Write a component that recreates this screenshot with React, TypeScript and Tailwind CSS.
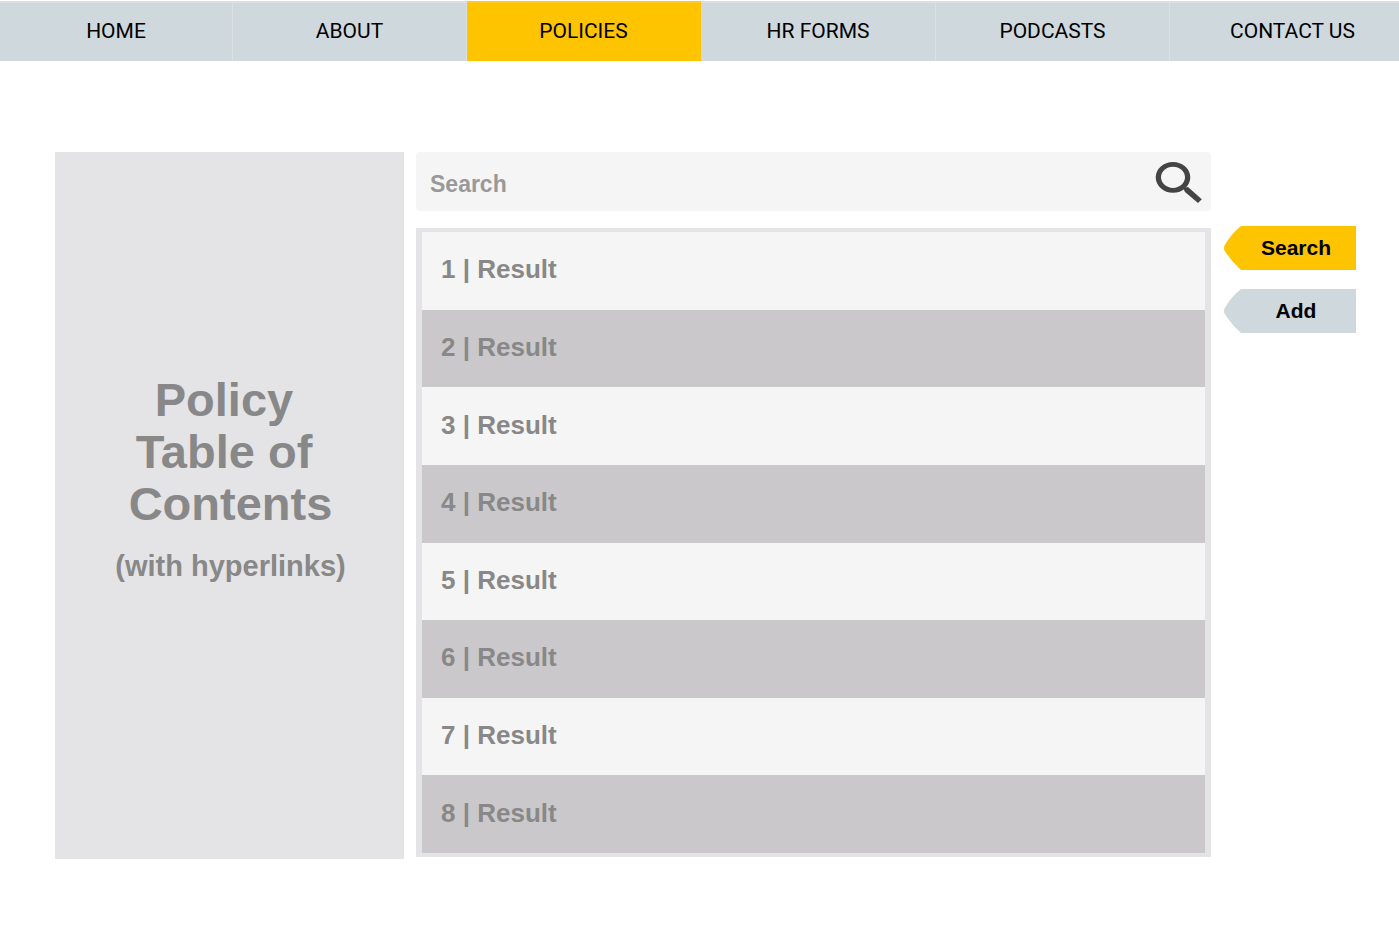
const navItems = ["HOME", "ABOUT", "POLICIES", "HR FORMS", "PODCASTS", "CONTACT US"];
const results = [1, 2, 3, 4, 5, 6, 7, 8];

function NavBar() {
  return (
    <nav className="grid grid-cols-[233fr_234fr_234fr_235fr_234fr_229fr] border-t border-white font-[Roboto,sans-serif] text-[21px] leading-6 text-black">
      {navItems.map((item) => (
        <a
          key={item}
          href="#"
          aria-current={item === "POLICIES" ? "page" : undefined}
          className={
            "flex h-15 items-center justify-center whitespace-nowrap border-t-2 border-r pb-0.5 last:border-r-0 last:pl-4 " +
            (item === "POLICIES"
              ? "border-t-[#ffca1f] border-r-[#ffc400] bg-[#ffc400]"
              : "border-t-[#dae0e1] border-r-[#dce1e4] bg-[#cfd8dd]")
          }
        >
          {item}
        </a>
      ))}
    </nav>
  );
}

function SearchBox() {
  return (
    <form className="flex h-[59px] items-center rounded-[4px] bg-[#f5f5f5] pr-2 pl-3.5" onSubmit={(e) => e.preventDefault()}>
      <input
        type="text"
        aria-label="Search"
        placeholder="Search"
        className="h-full min-w-0 flex-1 bg-transparent pt-1.5 text-[23px] font-bold text-[#888] outline-none placeholder:text-[#999]"
      />
      <button type="submit" aria-label="Run search">
        <svg width="48" height="42" viewBox="0 0 48 42" fill="#444">
          <path
            fillRule="evenodd"
            d="M0.7 16.3A17.3 15.4 0 1 1 35.3 16.3A17.3 15.4 0 1 1 0.7 16.3ZM6 16.3A12 10.6 0 1 0 30 16.3A12 10.6 0 1 0 6 16.3Z"
          />
          <path d="M28 27 33 26 46.8 38.2 43 42 30 31Z" />
        </svg>
      </button>
    </form>
  );
}

function TagButton({ label, active }: { label: string; active?: boolean }) {
  return (
    <button type="button" className="relative isolate h-11 w-full pl-3 text-[21px] leading-6 font-bold text-black">
      <svg
        aria-hidden="true"
        className={"absolute inset-0 -z-10 h-full w-full " + (active ? "text-[#ffc400]" : "text-[#cfd8dd]")}
        viewBox="0 0 132 44"
        preserveAspectRatio="none"
      >
        <path d="M132 0H17Q7 8 0.5 19.5Q-0.5 22 0.5 24.5Q7 35 17 44H132Z" fill="currentColor" />
      </svg>
      {label}
    </button>
  );
}

export default function App() {
  return (
    <div className="min-h-screen bg-white font-['Liberation_Sans',Arial,sans-serif]">
      <NavBar />
      <main className="grid grid-cols-[349fr_795fr_133fr] gap-x-3 pt-[91px] pr-[43px] pb-19 pl-[55px]">
        <aside className="flex flex-col items-center bg-[#e4e4e6] pt-[222px] pl-0.5 text-center font-bold text-[#888]">
          <h1 className="text-[47px] leading-[52px]">
            Policy&nbsp;
            <br />
            Table of&nbsp;
            <br />
            Contents
          </h1>
          <a href="#" className="mt-5 text-[29px] leading-8">
            (with hyperlinks)
          </a>
        </aside>
        <section className="flex flex-col gap-[17px] pb-0.5">
          <SearchBox />
          <ol className="grid min-h-[629px] flex-1 auto-rows-fr border-x-6 border-y-4 border-[#e4e4e6]">
            {results.map((n) => (
              <li
                key={n}
                className="flex items-center bg-[#f5f5f5] pb-[3px] pl-[19px] text-[26px] leading-8 font-bold text-[#888] even:bg-[#cac8cb]"
              >
                {n} | Result
              </li>
            ))}
          </ol>
        </section>
        <div className="flex flex-col gap-[19px] pt-[74px] pl-px">
          <TagButton label="Search" active />
          <TagButton label="Add" />
        </div>
      </main>
    </div>
  );
}
